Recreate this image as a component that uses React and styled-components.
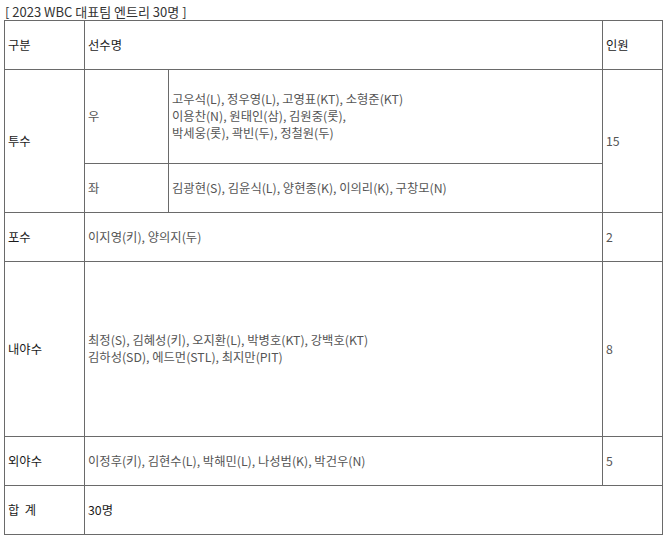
import React from 'react';
import styled, { createGlobalStyle } from 'styled-components';

const GlobalStyle = createGlobalStyle`
    html, body {
        margin: 0;
        padding: 0;
        background: #ffffff;
    }
    body {
        font-family: "Noto Sans CJK KR", "Noto Sans", sans-serif;
        font-size: 12px;
    }
`;

const Page = styled.div`
    padding: 3px 4px 0 4px;
    width: 666px;
    box-sizing: border-box;
`;

const Caption = styled.div`
    height: 17px;
    line-height: 17px;
    padding-left: 1px;
    color: #333;
    font-size: 13px;
`;

const Table = styled.table`
    border-collapse: collapse;
    table-layout: fixed;
    width: 659px;
    color: #555;
`;

const Row = styled.tr`
    height: ${props => props.$height}px;
`;

const Cell = styled.td`
    border: 1px solid #6a6a6a;
    padding: 0 3px;
    vertical-align: middle;
    line-height: 17px;
    font-size: 12.3px;
    color: ${props => (props.$label ? '#1a1a1a' : '#555')};
`;

const rows = [
    { label: '포수', names: ['이지영(키), 양의지(두)'], count: '2', height: 49 },
    {
        label: '내야수',
        names: [
            '최정(S), 김혜성(키), 오지환(L), 박병호(KT), 강백호(KT)',
            '김하성(SD), 에드먼(STL), 최지만(PIT)',
        ],
        count: '8',
        height: 175,
    },
    {
        label: '외야수',
        names: ['이정후(키), 김현수(L), 박해민(L), 나성범(K), 박건우(N)'],
        count: '5',
        height: 49,
    },
];

const Lines = ({ items }) =>
    items.map((line, i) => (
        <React.Fragment key={i}>
            {i > 0 && <br />}
            {line}
        </React.Fragment>
    ));

const App = () => {
    return (
        <>
            <GlobalStyle />
            <Page>
                <Caption>[ 2023 WBC 대표팀 엔트리 30명 ]</Caption>
                <Table>
                    <colgroup>
                        <col style={{ width: 80 }} />
                        <col style={{ width: 84 }} />
                        <col style={{ width: 434 }} />
                        <col style={{ width: 60 }} />
                    </colgroup>
                    <tbody>
                        <Row $height={49}>
                            <Cell $label>구분</Cell>
                            <Cell $label colSpan={2}>
                                선수명
                            </Cell>
                            <Cell $label>인원</Cell>
                        </Row>
                        <Row $height={94}>
                            <Cell $label rowSpan={2}>
                                투수
                            </Cell>
                            <Cell>우</Cell>
                            <Cell>
                                <Lines
                                    items={[
                                        '고우석(L), 정우영(L), 고영표(KT), 소형준(KT)',
                                        '이용찬(N), 원태인(삼), 김원중(롯),',
                                        '박세웅(롯), 곽빈(두), 정철원(두)',
                                    ]}
                                />
                            </Cell>
                            <Cell rowSpan={2}>15</Cell>
                        </Row>
                        <Row $height={49}>
                            <Cell>좌</Cell>
                            <Cell>
                                김광현(S), 김윤식(L), 양현종(K), 이의리(K), 구창모(N)
                            </Cell>
                        </Row>
                        {rows.map(r => (
                            <Row key={r.label} $height={r.height}>
                                <Cell $label>{r.label}</Cell>
                                <Cell colSpan={2}>
                                    <Lines items={r.names} />
                                </Cell>
                                <Cell>{r.count}</Cell>
                            </Row>
                        ))}
                        <Row $height={49}>
                            <Cell $label>합&nbsp;&nbsp;계</Cell>
                            <Cell $label colSpan={3}>
                                30명
                            </Cell>
                        </Row>
                    </tbody>
                </Table>
            </Page>
        </>
    );
};

export default App;
